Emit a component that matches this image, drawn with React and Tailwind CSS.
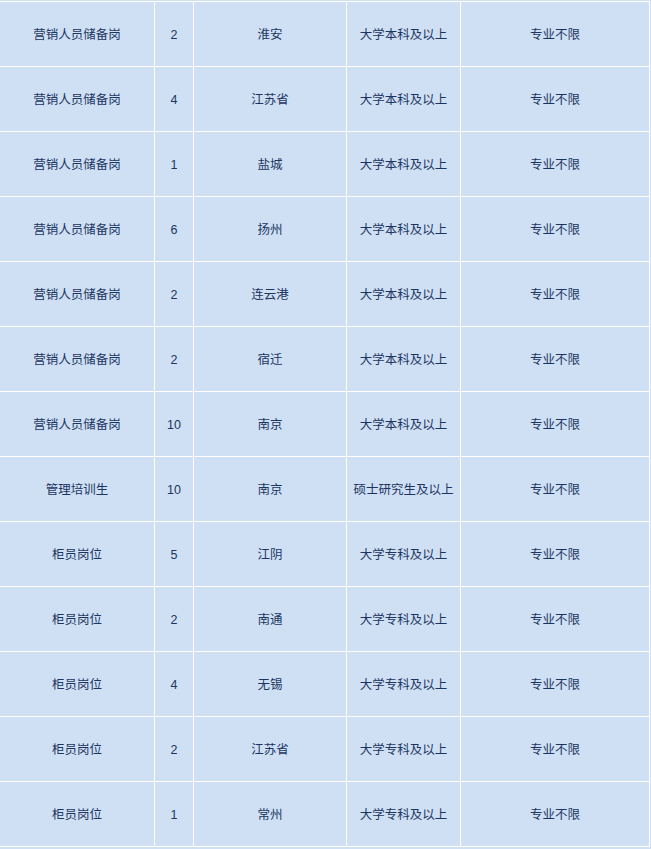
import React from "react";

const rows = [
  ["营销人员储备岗", "2", "淮安", "大学本科及以上", "专业不限"],
  ["营销人员储备岗", "4", "江苏省", "大学本科及以上", "专业不限"],
  ["营销人员储备岗", "1", "盐城", "大学本科及以上", "专业不限"],
  ["营销人员储备岗", "6", "扬州", "大学本科及以上", "专业不限"],
  ["营销人员储备岗", "2", "连云港", "大学本科及以上", "专业不限"],
  ["营销人员储备岗", "2", "宿迁", "大学本科及以上", "专业不限"],
  ["营销人员储备岗", "10", "南京", "大学本科及以上", "专业不限"],
  ["管理培训生", "10", "南京", "硕士研究生及以上", "专业不限"],
  ["柜员岗位", "5", "江阴", "大学专科及以上", "专业不限"],
  ["柜员岗位", "2", "南通", "大学专科及以上", "专业不限"],
  ["柜员岗位", "4", "无锡", "大学专科及以上", "专业不限"],
  ["柜员岗位", "2", "江苏省", "大学专科及以上", "专业不限"],
  ["柜员岗位", "1", "常州", "大学专科及以上", "专业不限"],
];

const App = () => {
  return (
    <div
      className="w-[651px] h-[849px] overflow-hidden bg-[#cfe0f5] pt-px"
      style={{ fontFamily: '"Liberation Sans", "Noto Sans CJK SC", sans-serif' }}
    >
      <div className="w-[650px] grid grid-cols-[154px_38px_152px_113px_188px] auto-rows-[64px] gap-px bg-white py-px pr-px">
        {rows.map((row, i) =>
          row.map((cell, j) => (
            <div
              key={i + "-" + j}
              className="flex items-center justify-center bg-[#cfe0f5] pt-0.5 text-[12.5px] text-[#1c3560]"
            >
              {cell}
            </div>
          ))
        )}
      </div>
    </div>
  );
};

export default App;
